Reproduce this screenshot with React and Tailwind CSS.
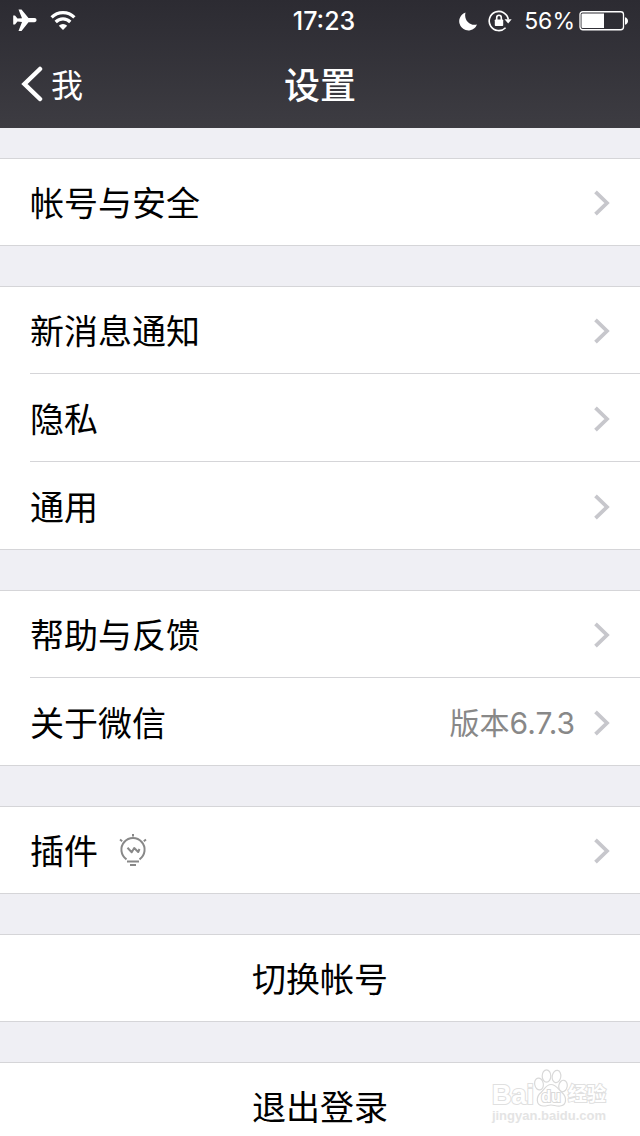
const groups = [
  [{ label: "帐号与安全" }],
  [{ label: "新消息通知" }, { label: "隐私" }, { label: "通用" }],
  [{ label: "帮助与反馈" }, { label: "关于微信", detail: "版本6.7.3" }],
  [{ label: "插件", icon: true }],
];

const actions = ["切换帐号", "退出登录"];

const AirplaneIcon = () => (
  <svg width="26" height="24" viewBox="0 0 26 24" fill="#fff">
    <path d="M22.500 9H16.500L9.500 0.500H6.500L10 9.200 5.500 9.600 3 6.500H1.200V15.500H3L5.500 12.600 10 13 6.500 22H9.500L16.500 13.200H22.500a2.100 2.100 0 0 0 0-4.200z" />
  </svg>
);

const WifiIcon = () => (
  <svg width="26" height="20" viewBox="0 1 26 20" fill="none" stroke="#fff" strokeWidth="3.200">
    <path d="M1.600 7.400a16.200 16.200 0 0 1 22.800 0" />
    <path d="M5.700 12a10.300 10.300 0 0 1 14.600 0" />
    <path d="M13 20l-4.200-4.200a6 6 0 0 1 8.400 0z" fill="#fff" stroke="none" />
  </svg>
);

const MoonIcon = () => (
  <svg width="20" height="20" viewBox="0 0 20 20" fill="#fff">
    <path d="M7.500 1.500A9.200 9.200 0 1 0 19 13.500C12 15.500 5.500 9 7.500 1.500z" />
  </svg>
);

const RotationLockIcon = () => (
  <svg width="24" height="22" viewBox="0 0 24 22" fill="none" stroke="#fff" strokeWidth="1.600">
    <path d="M17.600 17.800A9.600 9.600 0 1 1 20.300 9.500" />
    <path d="M16.500 9.200h7.200L20.200 13.400z" fill="#fff" stroke="none" />
    <rect x="6.800" y="9.500" width="8.400" height="6.500" rx="0.800" fill="#fff" stroke="none" />
    <path d="M8.700 10.500V7.800a2.300 2.500 0 0 1 4.600 0v2.700" />
  </svg>
);

const BatteryIcon = () => (
  <svg width="49" height="20" viewBox="0 0 49 20" fill="none">
    <rect x="1" y="0.750" width="43.500" height="18" rx="2.800" stroke="#fff" strokeWidth="1.300" />
    <path d="M3.500 2.500H25v14.500H3.500a1 1 0 0 1-1-1v-12.500a1 1 0 0 1 1-1z" fill="#fff" />
    <path d="M46 6.300c4 .8 4 6.600 0 7.400z" fill="#fff" />
  </svg>
);

const BulbIcon = () => (
  <svg
    width="28"
    height="34"
    viewBox="0 0 28 34"
    fill="none"
    stroke="#888"
    strokeWidth="2"
    strokeLinejoin="round"
  >
    <path d="M7.500 25.300a11.600 11.600 0 1 1 13 0" />
    <path d="M14 0v2.500M1 5.500l2.200 1.700M27 5.500l-2.200 1.700" />
    <path d="M8.500 13.800l4.200 4.400L15.200 14l4 4 1.300-3" />
    <path d="M8 27.500h12M11 31h6" />
  </svg>
);

const Chevron = () => (
  <svg width="18" height="26" viewBox="0 0 18 26" fill="none" stroke="#c7c7cc" strokeWidth="3.800">
    <path d="M2.500 1.800L14 13 2.500 24.200" />
  </svg>
);

const SettingRow = ({ label, detail, icon, last }) => (
  <li className={last ? "" : "relative after:absolute after:right-0 after:bottom-0 after:left-[30px] after:h-px after:bg-[#d5d5d8]"}>
    <button type="button" className="flex h-[88px] w-full items-center pt-0.5 pr-[29px] pl-[30px] text-left">
      <span className="pt-0.5 text-[34px] leading-[48px] text-black">{label}</span>
      {icon && (
        <span className="ml-[21px]">
          <BulbIcon />
        </span>
      )}
      <span className="ml-auto flex items-center gap-[18px]">
        {detail && <span className="text-[30px] leading-[42px] text-[#888]">{detail}</span>}
        <Chevron />
      </span>
    </button>
  </li>
);

const Watermark = () => (
  <div className="pointer-events-none absolute right-[34px] bottom-3 flex flex-col items-center text-white">
    <div className="flex items-end">
      <span className="font-['Liberation_Sans',sans-serif] text-[27px] leading-[26px] font-bold [-webkit-text-stroke:2px_#e0e0e0] [paint-order:stroke_fill]">
        Bai
      </span>
      <svg width="34" height="40" viewBox="0 0 34 40" fill="#fff" stroke="#d9d9d9" strokeWidth="1.200">
        <ellipse cx="5" cy="16" rx="4.300" ry="6" transform="rotate(-10 5 16)" />
        <ellipse cx="12.500" cy="8" rx="4.300" ry="6.200" />
        <ellipse cx="22.500" cy="8.500" rx="4.300" ry="6.200" transform="rotate(10 22.500 8.500)" />
        <ellipse cx="29" cy="18" rx="4.200" ry="5.800" transform="rotate(10 29 18)" />
        <path d="M17 16.500c-5 0-6.500 5-10 8-5 4-5.500 13 2 13.500 4 .2 5-1 8-1s5 1.300 9 1c7-.6 7-9 2-13.500-3.500-3-6-8-11-8z" />
        <text
          x="17"
          y="34"
          textAnchor="middle"
          fontFamily="Liberation Sans"
          fontSize="16"
          fontWeight="bold"
          strokeWidth="2"
          paintOrder="stroke"
        >
          du
        </text>
      </svg>
      <span className="text-[19px] leading-[26px] font-bold [-webkit-text-stroke:2px_#e0e0e0] [paint-order:stroke_fill]">
        经验
      </span>
    </div>
    <span className="font-['Liberation_Sans',sans-serif] text-[13px] leading-[16px] font-bold text-[#e4e4e4]">
      jingyan.baidu.com
    </span>
  </div>
);

export default function App() {
  return (
    <div className="relative flex h-screen flex-col overflow-hidden bg-[#efeff4] font-[Inter,'Noto_Sans_CJK_SC',sans-serif]">
      <header className="shrink-0 bg-linear-to-b from-[#2c2b32] to-[#3d3c42] text-white">
        <div className="grid h-10 grid-cols-3 items-center px-3 pt-0.5">
          <div className="flex items-center gap-3">
            <AirplaneIcon />
            <WifiIcon />
          </div>
          <span className="pl-2 text-center text-[25px] leading-7 font-medium">17:23</span>
          <div className="flex items-center justify-end">
            <MoonIcon />
            <span className="ml-2.5">
              <RotationLockIcon />
            </span>
            <span className="mr-1 ml-3 text-[23px] leading-7">56%</span>
            <BatteryIcon />
          </div>
        </div>
        <div className="grid h-[88px] grid-cols-3 items-center px-5">
          <button type="button" className="flex items-center gap-2 text-[32px] leading-10">
            <svg width="23" height="36" viewBox="0 0 23 36" fill="none" stroke="#fff" strokeWidth="4.500" strokeLinecap="round">
              <path d="M20 3L4.500 18 20 33" />
            </svg>
            <span className="pt-1">我</span>
          </button>
          <h1 className="pt-1 text-center text-[36px] leading-[50px] font-medium">设置</h1>
        </div>
      </header>

      <main className="flex min-h-0 flex-1 flex-col gap-10 overflow-y-auto pt-[30px] [scrollbar-width:none]">
        {groups.map((rows) => (
          <ul key={rows[0].label} className="shrink-0 bg-white shadow-[inset_0_1px_#d5d5d8,inset_0_-1px_#d5d5d8]">
            {rows.map((row, i) => (
              <SettingRow key={row.label} {...row} last={i === rows.length - 1} />
            ))}
          </ul>
        ))}
        {actions.map((label) => (
          <button
            key={label}
            type="button"
            className="h-[88px] w-full shrink-0 border-y border-[#d5d5d8] bg-white pt-1 text-center text-[34px] leading-[48px] text-black"
          >
            {label}
          </button>
        ))}
      </main>

      <Watermark />
    </div>
  );
}
